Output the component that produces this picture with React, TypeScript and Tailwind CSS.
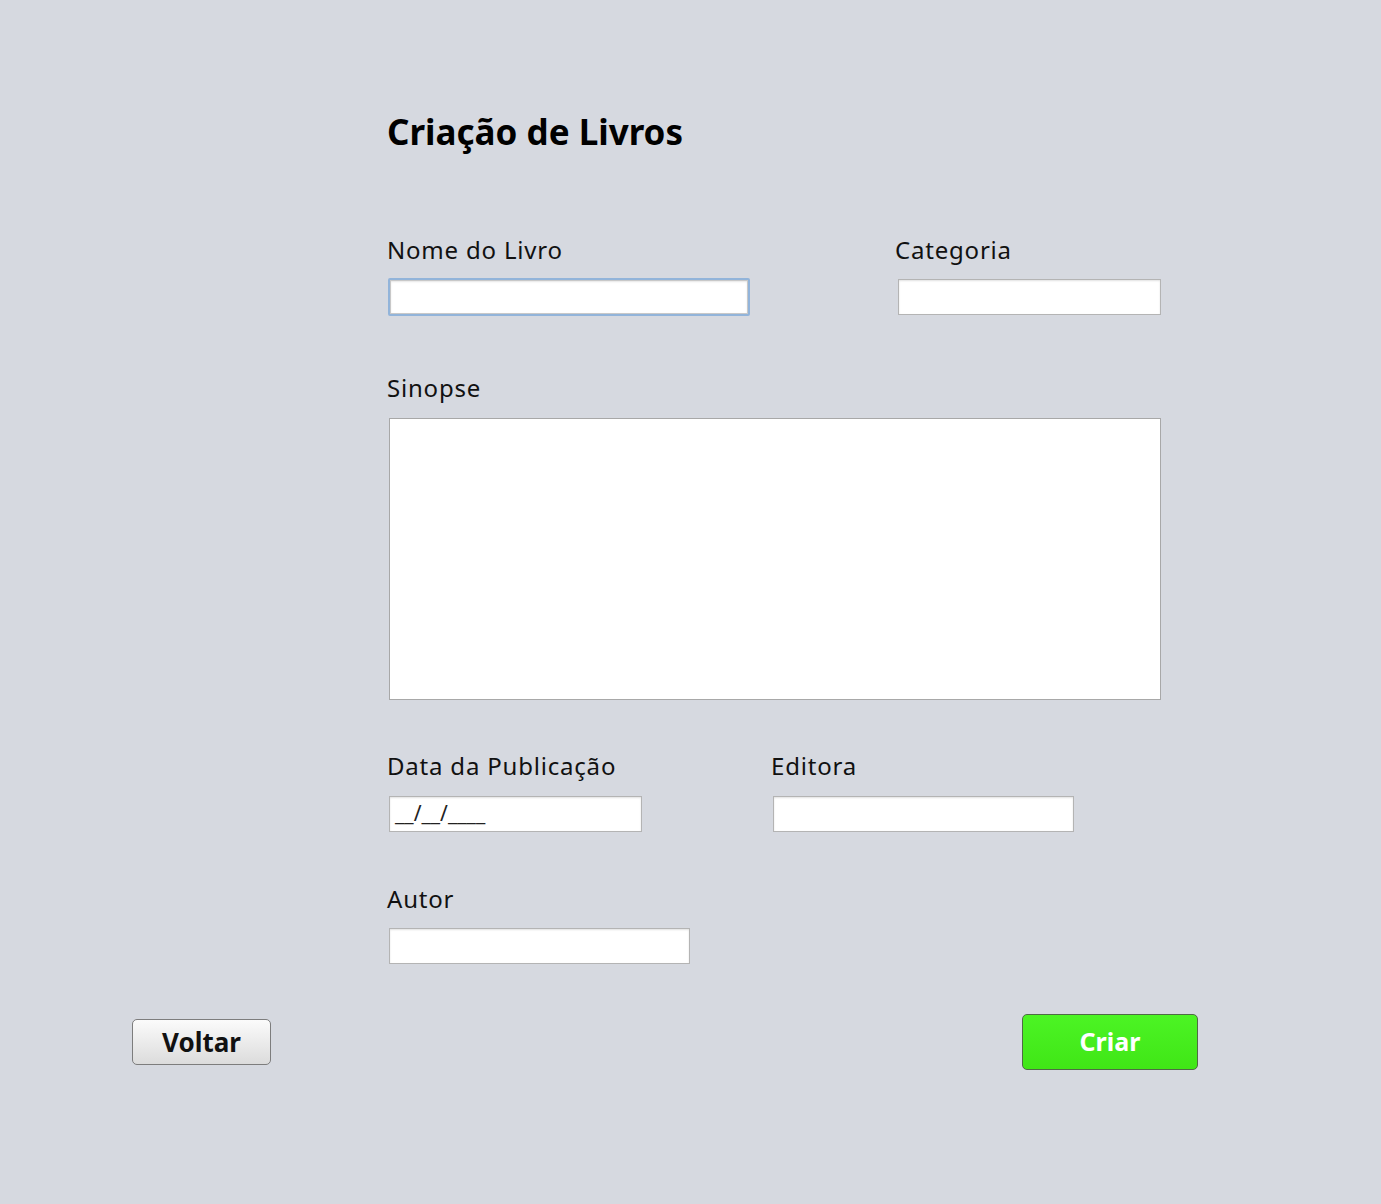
const font = { fontFamily: '"Noto Sans", "Open Sans", sans-serif' }

const Field = ({ className = "" }: { className?: string }) => (
  <input
    type="text"
    className={`block h-[36px] bg-white border border-[#b4b4b4] shadow-[inset_0_1px_2px_rgba(0,0,0,0.12)] outline-none ${className}`}
  />
)

const Label = ({ text, className = "" }: { text: string; className?: string }) => (
  <label className={`block text-[24px] leading-[36px] tracking-[0.8px] text-[#111] ${className}`}>{text}</label>
)

export default function App() {
  return (
    <main className="w-full min-h-[1204px] bg-[#d6d9e0] text-black" style={font}>
      <div className="pl-[387px] pt-[110px]">
        <h1 className="text-[35px] leading-[44px] font-bold">Criação de Livros</h1>

        <div className="mt-[78px] flex">
          <div className="w-[508px]">
            <Label text="Nome do Livro" />
            <div className="mt-[10px] ml-[1px] w-[362px] h-[38px] border-2 border-[#92b4da] rounded-[2px]">
              <input
                type="text"
                className="block w-full h-full bg-white border border-[#c8c8c8] shadow-[inset_0_1px_2px_rgba(0,0,0,0.1)] outline-none"
              />
            </div>
          </div>
          <div>
            <Label text="Categoria" />
            <Field className="mt-[11px] ml-[3px] w-[263px]" />
          </div>
        </div>

        <Label text="Sinopse" className="mt-[54px]" />
        <textarea className="mt-[12px] ml-[2px] block w-[772px] h-[282px] bg-white border border-[#a8a8a8] outline-none resize-none" />

        <div className="mt-[48px] flex">
          <div className="w-[384px]">
            <Label text="Data da Publicação" />
            <div className="mt-[12px] ml-[2px] w-[253px] h-[36px] bg-white border border-[#b4b4b4] shadow-[inset_0_1px_2px_rgba(0,0,0,0.12)] flex items-center pl-[5px] text-[21px] text-[#222]">
              __/__/____
            </div>
          </div>
          <div>
            <Label text="Editora" />
            <Field className="mt-[12px] ml-[2px] w-[301px]" />
          </div>
        </div>

        <Label text="Autor" className="mt-[49px]" />
        <Field className="mt-[11px] ml-[2px] w-[301px]" />
      </div>

      <div className="mt-[50px] ml-[132px] w-[1066px] flex items-center justify-between">
        <button className="w-[139px] h-[46px] rounded-[5px] border border-[#7d7d7d] bg-gradient-to-b from-[#fbfbfb] to-[#dcdcdc] text-[26px] font-bold text-[#111]">
          Voltar
        </button>
        <button className="w-[176px] h-[56px] rounded-[5px] border border-[#4f6b45] bg-gradient-to-b from-[#4cf424] to-[#40e616] text-[25px] font-bold text-white">
          Criar
        </button>
      </div>
    </main>
  )
}
